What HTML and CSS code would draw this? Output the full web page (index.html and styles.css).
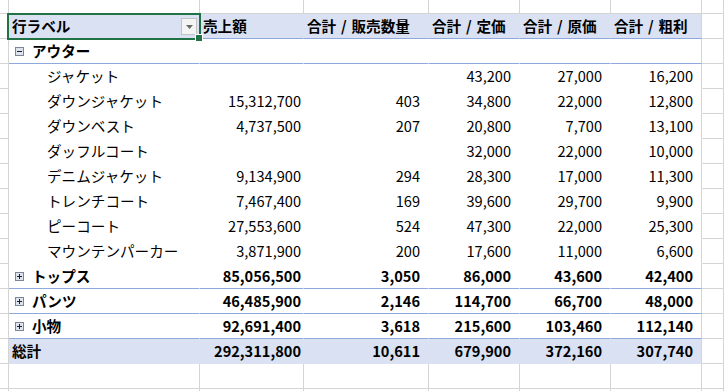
FILE: index.html
```html
<!DOCTYPE html>
<html lang="ja">
<head>
<meta charset="utf-8">
<title>ピボットテーブル</title>
<link rel="stylesheet" href="styles.css">
</head>
<body>
<div class="sheet">
  <div class="row r-top">
    <div class="c"></div><div class="c"></div><div class="c"></div><div class="c"></div><div class="c"></div><div class="c"></div><div class="c"></div><div class="c"></div>
  </div>

  <div class="row r hdr">
    <div class="c"></div>
    <div class="c p lab sel-cell">
      <span>行ラベル</span>
      <span class="dd"><svg width="7" height="4" viewBox="0 0 7 4"><path d="M0 0H7L3.5 4Z" fill="#6b6b6b"/></svg></span>
      <span class="sel"></span>
      <span class="handle"></span>
    </div>
    <div class="c p lab">売上額</div>
    <div class="c p lab">合計 / 販売数量</div>
    <div class="c p lab">合計 / 定価</div>
    <div class="c p lab">合計 / 原価</div>
    <div class="c p lab last">合計 / 粗利</div>
    <div class="c"></div>
  </div>

  <div class="row r grp">
    <div class="c"></div>
    <div class="c p lab grp-lab"><svg class="tog" width="9" height="9" viewBox="0 0 9 9"><rect x="0.5" y="0.5" width="8" height="8" fill="#dfe4ec" stroke="#7d8698"/><path d="M2 4.5H7" stroke="#16203a" stroke-width="1"/></svg><span>アウター</span></div>
    <div class="c p n nb"></div><div class="c p n"></div><div class="c p n"></div><div class="c p n"></div><div class="c p n last"></div>
    <div class="c"></div>
  </div>

  <div class="row r item">
    <div class="c"></div>
    <div class="c p lab sub">ジャケット</div>
    <div class="c p n nb"></div><div class="c p n"></div><div class="c p n">43,200</div><div class="c p n">27,000</div><div class="c p n last">16,200</div>
    <div class="c"></div>
  </div>
  <div class="row r item">
    <div class="c"></div>
    <div class="c p lab sub">ダウンジャケット</div>
    <div class="c p n nb">15,312,700</div><div class="c p n">403</div><div class="c p n">34,800</div><div class="c p n">22,000</div><div class="c p n last">12,800</div>
    <div class="c"></div>
  </div>
  <div class="row r item">
    <div class="c"></div>
    <div class="c p lab sub">ダウンベスト</div>
    <div class="c p n nb">4,737,500</div><div class="c p n">207</div><div class="c p n">20,800</div><div class="c p n">7,700</div><div class="c p n last">13,100</div>
    <div class="c"></div>
  </div>
  <div class="row r item">
    <div class="c"></div>
    <div class="c p lab sub">ダッフルコート</div>
    <div class="c p n nb"></div><div class="c p n"></div><div class="c p n">32,000</div><div class="c p n">22,000</div><div class="c p n last">10,000</div>
    <div class="c"></div>
  </div>
  <div class="row r item">
    <div class="c"></div>
    <div class="c p lab sub">デニムジャケット</div>
    <div class="c p n nb">9,134,900</div><div class="c p n">294</div><div class="c p n">28,300</div><div class="c p n">17,000</div><div class="c p n last">11,300</div>
    <div class="c"></div>
  </div>
  <div class="row r item">
    <div class="c"></div>
    <div class="c p lab sub">トレンチコート</div>
    <div class="c p n nb">7,467,400</div><div class="c p n">169</div><div class="c p n">39,600</div><div class="c p n">29,700</div><div class="c p n last">9,900</div>
    <div class="c"></div>
  </div>
  <div class="row r item">
    <div class="c"></div>
    <div class="c p lab sub">ピーコート</div>
    <div class="c p n nb">27,553,600</div><div class="c p n">524</div><div class="c p n">47,300</div><div class="c p n">22,000</div><div class="c p n last">25,300</div>
    <div class="c"></div>
  </div>
  <div class="row r item">
    <div class="c"></div>
    <div class="c p lab sub">マウンテンパーカー</div>
    <div class="c p n nb">3,871,900</div><div class="c p n">200</div><div class="c p n">17,600</div><div class="c p n">11,000</div><div class="c p n last">6,600</div>
    <div class="c"></div>
  </div>

  <div class="row r grp">
    <div class="c"></div>
    <div class="c p lab grp-lab"><svg class="tog" width="9" height="9" viewBox="0 0 9 9"><rect x="0.5" y="0.5" width="8" height="8" fill="#dfe4ec" stroke="#7d8698"/><path d="M2 4.5H7M4.5 2V7" stroke="#16203a" stroke-width="1"/></svg><span>トップス</span></div>
    <div class="c p n nb">85,056,500</div><div class="c p n">3,050</div><div class="c p n">86,000</div><div class="c p n">43,600</div><div class="c p n last">42,400</div>
    <div class="c"></div>
  </div>
  <div class="row r grp">
    <div class="c"></div>
    <div class="c p lab grp-lab"><svg class="tog" width="9" height="9" viewBox="0 0 9 9"><rect x="0.5" y="0.5" width="8" height="8" fill="#dfe4ec" stroke="#7d8698"/><path d="M2 4.5H7M4.5 2V7" stroke="#16203a" stroke-width="1"/></svg><span>パンツ</span></div>
    <div class="c p n nb">46,485,900</div><div class="c p n">2,146</div><div class="c p n">114,700</div><div class="c p n">66,700</div><div class="c p n last">48,000</div>
    <div class="c"></div>
  </div>
  <div class="row r grp">
    <div class="c"></div>
    <div class="c p lab grp-lab"><svg class="tog" width="9" height="9" viewBox="0 0 9 9"><rect x="0.5" y="0.5" width="8" height="8" fill="#dfe4ec" stroke="#7d8698"/><path d="M2 4.5H7M4.5 2V7" stroke="#16203a" stroke-width="1"/></svg><span>小物</span></div>
    <div class="c p n nb">92,691,400</div><div class="c p n">3,618</div><div class="c p n">215,600</div><div class="c p n">103,460</div><div class="c p n last">112,140</div>
    <div class="c"></div>
  </div>

  <div class="row r tot">
    <div class="c"></div>
    <div class="c p lab">総計</div>
    <div class="c p n nb">292,311,800</div><div class="c p n">10,611</div><div class="c p n">679,900</div><div class="c p n">372,160</div><div class="c p n last">307,740</div>
    <div class="c"></div>
  </div>

  <div class="row r">
    <div class="c"></div><div class="c"></div><div class="c"></div><div class="c"></div><div class="c"></div><div class="c"></div><div class="c"></div><div class="c"></div>
  </div>
  <div class="row r">
    <div class="c"></div><div class="c"></div><div class="c"></div><div class="c"></div><div class="c"></div><div class="c"></div><div class="c"></div><div class="c"></div>
  </div>
</div>
</body>
</html>
```

FILE: styles.css
```css
html, body {
  margin: 0;
  padding: 0;
  background: #fff;
}

.sheet {
  width: 724px;
  height: 391px;
  overflow: hidden;
  font-family: "Noto Sans CJK JP", "Noto Sans", sans-serif;
  font-size: 14.6px;
  line-height: 1;
  color: #000;
}

.row {
  display: grid;
  grid-template-columns: 9px 191px 104px 125px 91px 91px 91px 1fr;
}

.r-top { height: 14px; }
.r { height: 25px; }

.c {
  box-sizing: border-box;
  border-right: 1px solid #d4d4d4;
  border-bottom: 1px solid #d4d4d4;
  display: flex;
  align-items: center;
  white-space: nowrap;
  min-width: 0;
}

/* pivot cells */
.p {
  background: #fff;
  border-right-color: transparent;
  border-bottom-color: transparent;
}
.p.last { border-right-color: #d4d4d4; }

.lab { padding-left: 3px; }
.sub { padding-left: 38px; }
.grp-lab { padding-left: 6px; }
.tog { flex: none; margin-right: 8px; }

.n {
  justify-content: flex-end;
  padding-right: 8px;
}
.n.nb { padding-right: 2px; }

/* header row */
.hdr .p {
  background: #d9e1f2;
  border-bottom-color: #8ea9db;
  font-weight: 700;
  word-spacing: 1.5px;
}

/* group rows */
.grp .p {
  border-bottom-color: #8ea9db;
  font-weight: 700;
}

/* grand total */
.tot .p {
  background: #d9e1f2;
  font-weight: 700;
}

/* active cell + filter button */
.sel-cell { position: relative; }

.dd {
  margin-left: auto;
  margin-right: 2px;
  width: 16px;
  height: 17px;
  box-sizing: border-box;
  border: 1px solid #c3c3c3;
  background: #f4f4f4;
  display: flex;
  align-items: center;
  justify-content: center;
  padding-top: 1px;
}

.sel {
  position: absolute;
  left: -2px;
  top: -1px;
  width: 194px;
  height: 27px;
  box-sizing: border-box;
  border: 2px solid #217346;
  pointer-events: none;
}

.handle {
  position: absolute;
  left: 187px;
  top: 21px;
  width: 6px;
  height: 6px;
  background: #217346;
  box-shadow: 0 0 0 1px #fff;
}
```
